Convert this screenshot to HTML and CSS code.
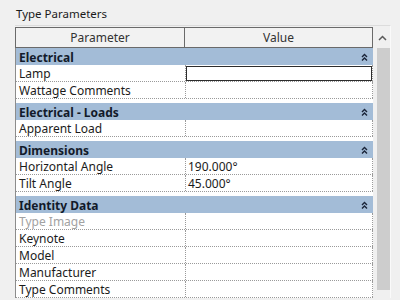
FILE: index.html
```html
<!DOCTYPE html>
<html lang="en">
  <head>
    <meta charset="UTF-8" />
    <title>Type Parameters</title>
    <link rel="stylesheet" href="styles.css">
  </head>
  <body>
    <div class="title">Type Parameters</div>

    <div class="box">
      <div class="table">
        <div class="head">
          <div class="cell">Parameter</div>
          <div class="cell">Value</div>
        </div>

        <div class="band first">
          <span>Electrical</span>
          <svg class="fold" width="7" height="8" viewBox="0 0 7 8"><path d="M1 4 L3.5 1.5 L6 4 M1 7.5 L3.5 5 L6 7.5" /></svg>
        </div>
        <div class="row">
          <div class="cell">Lamp</div>
          <div class="cell"><div class="edit"></div></div>
        </div>
        <div class="row">
          <div class="cell">Wattage Comments</div>
          <div class="cell"></div>
        </div>

        <div class="band">
          <span>Electrical - Loads</span>
          <svg class="fold" width="7" height="8" viewBox="0 0 7 8"><path d="M1 4 L3.5 1.5 L6 4 M1 7.5 L3.5 5 L6 7.5" /></svg>
        </div>
        <div class="row">
          <div class="cell">Apparent Load</div>
          <div class="cell"></div>
        </div>

        <div class="band">
          <span>Dimensions</span>
          <svg class="fold" width="7" height="8" viewBox="0 0 7 8"><path d="M1 4 L3.5 1.5 L6 4 M1 7.5 L3.5 5 L6 7.5" /></svg>
        </div>
        <div class="row">
          <div class="cell">Horizontal Angle</div>
          <div class="cell">190.000°</div>
        </div>
        <div class="row">
          <div class="cell">Tilt Angle</div>
          <div class="cell">45.000°</div>
        </div>

        <div class="band">
          <span>Identity Data</span>
          <svg class="fold" width="7" height="8" viewBox="0 0 7 8"><path d="M1 4 L3.5 1.5 L6 4 M1 7.5 L3.5 5 L6 7.5" /></svg>
        </div>
        <div class="row">
          <div class="cell muted">Type Image</div>
          <div class="cell"></div>
        </div>
        <div class="row">
          <div class="cell">Keynote</div>
          <div class="cell"></div>
        </div>
        <div class="row">
          <div class="cell">Model</div>
          <div class="cell"></div>
        </div>
        <div class="row">
          <div class="cell">Manufacturer</div>
          <div class="cell"></div>
        </div>
        <div class="row">
          <div class="cell">Type Comments</div>
          <div class="cell"></div>
        </div>
      </div>

      <div class="scrollbar">
        <div class="arrow">
          <svg width="9" height="6" viewBox="0 0 9 6"><path d="M1 5 L4.5 1.5 L8 5" /></svg>
        </div>
        <div class="thumb"></div>
      </div>
    </div>
  </body>
</html>
```

FILE: styles.css
```css
body {
  margin: 0;
  background: #f0f0f0;
  font-family: "Noto Sans", "Open Sans", sans-serif;
  font-size: 12px;
  color: #1b1b1b;
  height: 300px;
  overflow: hidden;
}

.title {
  padding: 6px 0 0 16px;
  height: 19px;
  line-height: 16px;
  font-size: 11.5px;
}

.box {
  display: flex;
  margin-left: 15px;
  width: 375px;
  border-top: 1px solid #dcdcdc;
  border-right: 1px solid #fafafa;
  padding-top: 1px;
}

.table {
  width: 357px;
  border-left: 1px solid #8c8c8c;
  background: #ffffff;
}

.head {
  display: grid;
  grid-template-columns: 169px 1fr;
  height: 19px;
  border: 1px solid #6a6a6a;
  background: #f2f2f2;
  margin-left: -1px;
}

.head .cell {
  text-align: center;
  line-height: 19px;
  color: #333;
}

.head .cell:first-child {
  border-right: 1px solid #6a6a6a;
}

.band {
  display: flex;
  justify-content: space-between;
  align-items: center;
  height: 17px;
  margin-top: 4px;
  padding: 1px 5px 0 3px;
  box-sizing: border-box;
  background: #a3bcd7;
  font-weight: bold;
  color: #121a2a;
}

.band.first {
  margin-top: 0;
}

.fold path {
  fill: none;
  stroke: #1a2438;
  stroke-width: 1.4;
}

.row {
  display: grid;
  grid-template-columns: 170px 187px;
  height: 17px;
  box-sizing: border-box;
  border-bottom: 1px dotted #9a9a9a;
}

.row .cell {
  line-height: 18px;
  height: 16px;
  padding-left: 3px;
  border-right: 1px dotted #9a9a9a;
  white-space: nowrap;
}

.row .cell:last-child {
  padding-left: 2px;
}

.row .muted {
  color: #a2a2a2;
}

.edit {
  margin: 1px 0 0 -2px;
  height: 15px;
  box-sizing: border-box;
  border: 1px solid #2c2c2c;
  background: #fff;
}

.scrollbar {
  width: 17px;
  margin-left: 1px;
  display: flex;
  flex-direction: column;
  align-items: center;
}

.arrow {
  height: 21px;
  display: flex;
  align-items: center;
  justify-content: center;
}

.arrow path {
  fill: none;
  stroke: #5a5a5a;
  stroke-width: 1.5;
}

.thumb {
  width: 13px;
  height: 242px;
  margin-left: 2px;
  background: #cdcdcd;
}
```
